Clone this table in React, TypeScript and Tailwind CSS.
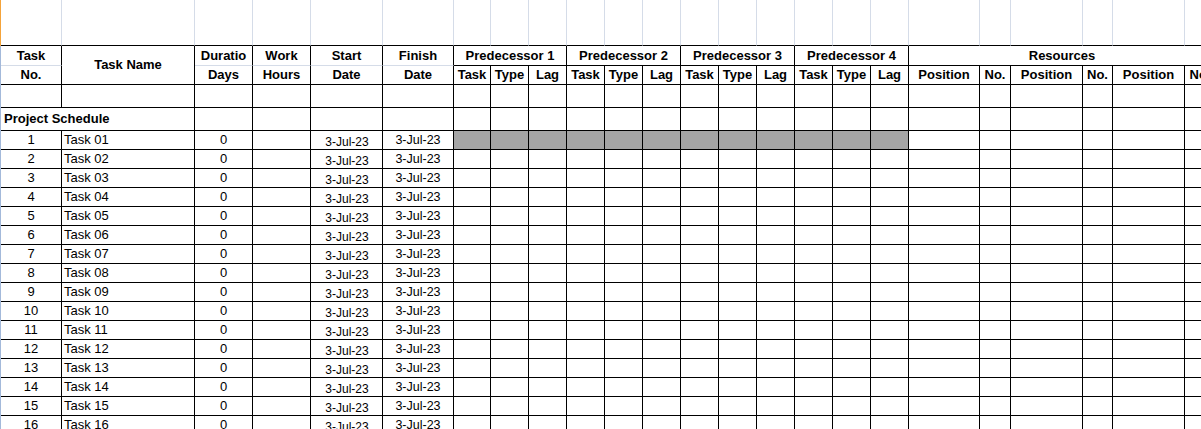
import React from "react";

const predecessors = [1, 2, 3, 4];
const resourceHeads = ["Position", "No.", "Position", "No.", "Position", "No."];

// every cell draws its own right + bottom edge, like a sheet grid
const cell = "flex items-center justify-center border-r border-b border-black overflow-hidden whitespace-nowrap";
const headTop = "flex items-center justify-center border-r border-b border-r-black border-b-[#d5dce8] overflow-hidden whitespace-nowrap";

function Blank({ gray }: { gray?: boolean }) {
  return <div className={gray ? `${cell} bg-[#a5a5a5]` : cell} />;
}

function TaskRow({ n }: { n: number }) {
  const label = `Task ${String(n).padStart(2, "0")}`;
  return (
    <>
      <div className={`${cell} text-[13px]`}>{n}</div>
      <div className={`${cell} justify-start pl-[2px] text-[13px]`}>{label}</div>
      <div className={`${cell} text-[13px]`}>0</div>
      <div className={cell} />
      <div className={`${cell} pt-[3px] pl-[1px] text-[12px]`}>3-Jul-23</div>
      <div className={`${cell} text-[12.5px]`}>3-Jul-23</div>
      {Array.from({ length: 12 }, (_, i) => (
        <Blank key={`p${i}`} gray={n === 1} />
      ))}
      {Array.from({ length: 6 }, (_, i) => (
        <Blank key={`r${i}`} />
      ))}
    </>
  );
}

export default function App() {
  const tasks = Array.from({ length: 18 }, (_, i) => i + 1);

  return (
    <div className="h-[429px] w-[1201px] overflow-hidden bg-white font-['Liberation_Sans',Arial,sans-serif] text-black">
      <div className="flex">
        <div className="flex w-px shrink-0 flex-col">
          <div className="h-[46px] bg-[#f4a33a]" />
          <div className="flex-1 bg-[#a3b9da]" />
        </div>

        <div className="grid shrink-0 grid-cols-[61px_133px_58px_58px_72px_71px_37px_repeat(11,38px)_71px_31px_72px_30px_72px_31px] grid-rows-[46px_20px_19px_23px_23px] auto-rows-[19px]">
          {/* empty title row */}
          {Array.from({ length: 24 }, (_, i) => (
            <div key={`t${i}`} className="border-r border-b border-r-[#d5dce8] border-b-black" />
          ))}

          {/* header, first line */}
          <div className={`${headTop} text-[13px] font-bold`}>Task</div>
          <div className={`${cell} row-span-2 text-[13px] font-bold`}>Task Name</div>
          <div className={`${headTop} text-[13px] font-bold`}>Duratio</div>
          <div className={`${headTop} text-[13px] font-bold`}>Work</div>
          <div className={`${headTop} text-[13px] font-bold`}>Start</div>
          <div className={`${headTop} text-[13px] font-bold`}>Finish</div>
          {predecessors.map((p) => (
            <div key={p} className={`${cell} col-span-3 text-[13px] font-bold`}>
              Predecessor {p}
            </div>
          ))}
          <div className={`${cell} col-span-6 text-[13px] font-bold`}>Resources</div>

          {/* header, second line */}
          <div className={`${cell} text-[13px] font-bold`}>No.</div>
          <div className={`${cell} text-[13px] font-bold`}>Days</div>
          <div className={`${cell} text-[13px] font-bold`}>Hours</div>
          <div className={`${cell} text-[13px] font-bold`}>Date</div>
          <div className={`${cell} text-[13px] font-bold`}>Date</div>
          {predecessors.map((p) => (
            <React.Fragment key={p}>
              <div className={`${cell} text-[13px] font-bold`}>Task</div>
              <div className={`${cell} text-[13px] font-bold`}>Type</div>
              <div className={`${cell} text-[13px] font-bold`}>Lag</div>
            </React.Fragment>
          ))}
          {resourceHeads.map((h, i) => (
            <div key={i} className={`${cell} text-[13px] font-bold`}>
              {h}
            </div>
          ))}

          {/* spacer row */}
          {Array.from({ length: 24 }, (_, i) => (
            <Blank key={`b${i}`} />
          ))}

          {/* section label */}
          <div className={`${cell} col-span-2 justify-start pl-[3px] text-[13px] font-bold`}>Project Schedule</div>
          {Array.from({ length: 22 }, (_, i) => (
            <Blank key={`s${i}`} />
          ))}

          {tasks.map((n) => (
            <TaskRow key={n} n={n} />
          ))}
        </div>
      </div>
    </div>
  );
}
